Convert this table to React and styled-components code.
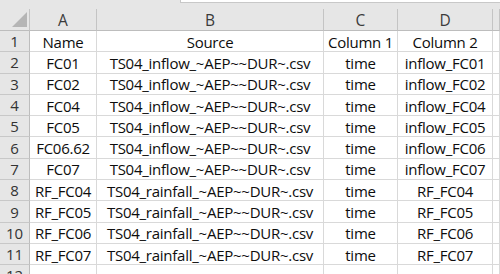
import React from 'react';
import styled, { createGlobalStyle } from 'styled-components';

const GlobalStyle = createGlobalStyle`
  html, body {
    margin: 0;
    padding: 0;
    background: #ffffff;
    overflow: hidden;
  }
  * {
    box-sizing: border-box;
  }
`;

const Window = styled.div`
  width: 500px;
  height: 274px;
  overflow: hidden;
  background: #e6e6e6;
  font-family: 'Open Sans', 'Noto Sans', sans-serif;
  color: #111;
`;

const TopStrip = styled.div`
  height: 9px;
  display: flex;
  justify-content: flex-end;
`;

const FormulaBox = styled.div`
  width: 320px;
  height: 3px;
  background: #ffffff;
  border-left: 1px solid #c8c8c8;
  border-bottom: 1px solid #c8c8c8;
`;

const Sheet = styled.div`
  display: grid;
  grid-template-columns: 30px 67px 227px 74px 95px 7px;
  grid-template-rows: 22px;
  grid-auto-rows: 21.3px;
  background: #ffffff;
`;

const ColHead = styled.div`
  background: #e6e6e6;
  border-right: 1px solid #c4c4c4;
  border-bottom: 1px solid #bdbdbd;
  display: flex;
  align-items: center;
  justify-content: center;
  font-size: 15.5px;
  color: #3b3b3b;
  padding-top: 1px;
`;

const Corner = styled(ColHead)`
  position: relative;
  &::after {
    content: '';
    position: absolute;
    right: 2px;
    bottom: 3px;
    width: 0;
    height: 0;
    border-left: 15px solid transparent;
    border-bottom: 15px solid #b5b5b5;
  }
`;

const RowHead = styled.div`
  background: #e6e6e6;
  border-right: 1px solid #bdbdbd;
  border-bottom: 1px solid #c8c8c8;
  display: flex;
  align-items: center;
  justify-content: center;
  font-size: 15px;
  color: #333;
`;

const Cell = styled.div`
  border-right: 1px solid #d9d9d9;
  border-bottom: 1px solid #d9d9d9;
  display: flex;
  align-items: center;
  justify-content: center;
  font-size: 15px;
  letter-spacing: -0.25px;
  white-space: nowrap;
  overflow: hidden;
  color: #0d0d0d;
  padding-top: 1px;
`;

const columns = ['A', 'B', 'C', 'D'];

const rows = [
  ['Name', 'Source', 'Column 1', 'Column 2'],
  ['FC01', 'TS04_inflow_~AEP~~DUR~.csv', 'time', 'inflow_FC01'],
  ['FC02', 'TS04_inflow_~AEP~~DUR~.csv', 'time', 'inflow_FC02'],
  ['FC04', 'TS04_inflow_~AEP~~DUR~.csv', 'time', 'inflow_FC04'],
  ['FC05', 'TS04_inflow_~AEP~~DUR~.csv', 'time', 'inflow_FC05'],
  ['FC06.62', 'TS04_inflow_~AEP~~DUR~.csv', 'time', 'inflow_FC06'],
  ['FC07', 'TS04_inflow_~AEP~~DUR~.csv', 'time', 'inflow_FC07'],
  ['RF_FC04', 'TS04_rainfall_~AEP~~DUR~.csv', 'time', 'RF_FC04'],
  ['RF_FC05', 'TS04_rainfall_~AEP~~DUR~.csv', 'time', 'RF_FC05'],
  ['RF_FC06', 'TS04_rainfall_~AEP~~DUR~.csv', 'time', 'RF_FC06'],
  ['RF_FC07', 'TS04_rainfall_~AEP~~DUR~.csv', 'time', 'RF_FC07'],
  ['', '', '', ''],
];

export default function App() {
  return (
    <Window>
      <GlobalStyle />
      <TopStrip>
        <FormulaBox />
      </TopStrip>
      <Sheet>
        <Corner />
        {columns.map((c) => (
          <ColHead key={c}>{c}</ColHead>
        ))}
        <ColHead />
        {rows.map((row, i) => (
          <React.Fragment key={i}>
            <RowHead>{i + 1}</RowHead>
            {row.map((val, j) => (
              <Cell key={j}>{val}</Cell>
            ))}
            <Cell />
          </React.Fragment>
        ))}
      </Sheet>
    </Window>
  );
}
